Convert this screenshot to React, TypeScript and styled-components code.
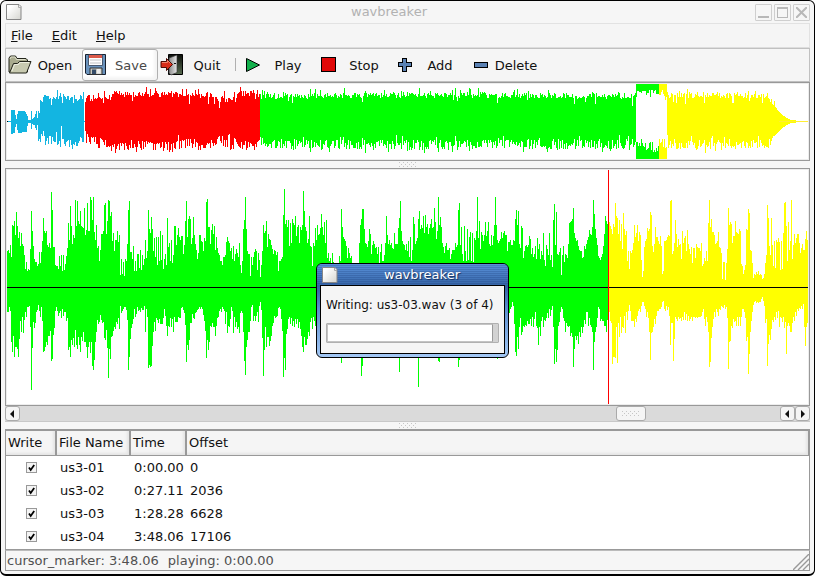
import React from "react";
import styled, { createGlobalStyle, css } from "styled-components";

const GlobalStyle = createGlobalStyle`
  * { box-sizing: border-box; }
  html, body { margin: 0; padding: 0; background: #fff; }
  body, button { font: 13px/16px "DejaVu Sans", sans-serif; color: #111; }
  button { margin: 0; padding: 0; border: 0; background: none; }
  svg { display: block; flex: none; }
`;

/* ---------- waveform data ---------- */

/* Samples are display levels, one per column, three levels to a pixel. */
const SILENCE = 367;
const COLS = 801;

type Segment = { start: number; length: number; upper: string; lower: string };

const SEGMENTS: Segment[] = [
  {
    start: 0,
    length: 198,
    upper: `258 256 266 240 278 180 185 168 210 141 183 220 202 243 204 237 243 272 312 293 320 312 315 252 138 200 243 282 291 293 303 297
      262 295 262 228 160 198 206 200 240 246 234 250 81 135 246 246 300 303 305 312 275 303 270 320 272 315 297 273 249 174 225 123
      185 237 210 220 105 185 108 170 178 138 183 186 190 130 210 195 115 200 200 98 105 165 96 202 225 180 250 245 290 255 208 208
      198 120 114 208 170 105 108 153 142 230 205 258 225 225 200 232 210 330 282 328 293 335 282 290 237 135 110 262 262 282 243 320
      290 320 267 267 310 256 315 270 300 282 225 280 258 135 193 205 158 192 260 220 278 217 300 217 288 198 285 210 312 282 267 300
      160 248 234 290 225 296 270 183 185 240 210 190 216 225 213 213 268 240 170 108 216 162 153 162 237 220 158 212 237 255 282 265
      210 212 228 232 258 220`,
    lower: `440 440 425 435 528 558 510 575 543 545 550 573 520 465 500 455 503 462 440 455 425 425 420 485 672 548 470 487 473 440 433 418
      437 455 425 467 560 557 545 530 537 510 510 497 587 579 508 486 437 424 437 450 443 435 458 430 452 440 440 467 457 552 543 575
      522 537 517 543 492 538 550 515 538 560 515 525 500 528 530 543 578 545 528 563 528 600 614 582 530 498 463 475 470 447 462 471
      470 517 524 492 548 638 549 581 513 512 497 485 490 470 476 456 489 420 443 435 430 425 425 433 464 614 575 521 488 475 460 431
      453 445 425 437 432 440 428 432 432 420 500 430 453 608 598 605 602 540 500 470 495 458 462 473 460 476 475 476 458 430 450 480
      510 480 484 457 485 460 500 455 470 468 470 455 458 458 428 423 432 442 478 590 537 552 523 473 473 445 458 460 443 440 433 430
      423 430 425 430 448 465`,
  },
  {
    start: 198,
    length: 205,
    upper: `228 112 102 186 186 237 195 177 207 183 255 216 249 264 270 290 290 300 276 276 270 232 216 228 234 260 249 284 243 288 268 252
      265 276 234 302 324 290 192 165 96 192 258 267 267 335 276 300 276 262 252 258 315 264 285 336 300 258 180 204 200 168 246 207
      222 225 240 252 267 255 258 270 262 318 290 290 282 276 150 72 178 165 186 165 243 174 234 162 174 182 153 213 186 180 234 186
      195 180 78 140 186 198 234 222 153 243 248 303 234 243 189 225 180 210 207 190 147 186 210 172 234 165 280 264 290 280 300 264
      292 295 300 300 300 300 275 290 132 186 217 222 230 245 280 250 264 280 273 300 300 300 300 300 300 300 234 180 162 132 132 192
      235 237 246 230 192 207 268 240 228 237 250 246 268 246 295 262 237 290 290 270 234 153 210 237 225 240 234 250 252 204 237 237
      237 190 160 108 200 228 237 240 255 238 258 228 276`,
    lower: `495 578 524 552 530 480 483 472 485 485 512 480 458 455 435 430 440 425 430 437 475 440 502 480 485 460 425 437 502 455 485 470
      490 485 503 443 437 443 500 585 627 545 524 498 498 465 425 417 465 452 465 452 440 470 420 408 432 517 630 552 485 543 515 513
      540 525 510 480 472 452 457 455 452 428 425 430 460 497 633 578 614 505 490 460 455 475 458 480 465 485 460 476 460 488 470 490
      510 543 560 515 537 537 520 500 510 470 458 490 455 467 480 500 500 500 500 500 500 500 500 500 500 500 500 500 500 500 500 500
      500 500 500 500 500 500 500 500 591 520 500 500 500 500 500 500 500 500 500 500 500 500 500 500 500 500 500 500 630 600 500 500
      500 500 500 500 500 500 500 500 500 500 500 500 500 500 500 500 500 500 500 500 500 500 500 500 500 500 500 500 500 500 500 500
      500 500 618 500`,
  },
  {
    start: 403,
    length: 198,
    upper: `216 288 255 158 178 237 228 220 162 138 192 180 190 155 204 150 188 178 207 190 178 162 190 186 129 172 222 198 96 180 158 186
      234 246 264 243 234 255 255 249 282 268 255 255 255 234 246 240 135 114 240 186 268 290 183 258 288 192 286 216 202 290 204 292
      219 225 198 96 219 168 252 201 210 228 210 171 213 198 171 238 243 210 240 213 180 96 180 225 234 228 222 202 219 204 198 210
      210 258 232 232 225 240 240 225 228 162 135 180 138 237 250 183 189 280 258 243 240 246 240 213 222 268 250 276 267 243 282 219
      252 238 282 258 270 204 285 305 240 252 270 204 285 270 308 165 117 240 141 267 270 261 250 330 270 243 291 268 270 280 238 174
      172 170 162 129 204 219 228 225 243 255 258 260 280 276 243 252 237 225 216 195 207 210 186 105 147 192 219 240 273 280 285 276
      267 243 207 153 168 177`,
    lower: `500 500 500 500 500 500 500 500 663 500 500 500 500 500 500 500 500 500 500 500 500 500 500 500 500 500 500 500 587 590 500 500
      500 500 500 500 500 500 500 500 500 500 500 500 500 500 500 500 603 583 500 500 500 500 500 500 500 500 500 500 500 500 500 500
      500 500 500 500 500 500 500 500 500 500 500 500 500 500 500 500 500 500 500 500 500 500 500 581 500 500 500 500 500 500 500 500
      470 455 450 443 430 423 410 422 475 558 570 515 549 485 458 508 498 480 485 477 480 467 476 476 460 480 455 485 460 440 480 488
      537 485 510 465 455 485 462 465 458 442 458 430 450 433 420 485 594 549 588 552 480 470 440 425 430 458 465 500 472 482 483 480
      510 502 515 603 549 510 522 510 534 498 513 485 502 485 462 475 440 440 480 458 478 485 500 614 528 498 485 457 425 430 465 460
      467 467 480 480 498 462`,
  },
  {
    start: 601,
    length: 200,
    upper: `175 172 183 192 207 178 186 114 153 160 207 165 228 178 252 144 192 210 198 288 258 312 258 264 255 234 180 216 204 180 228 201
      210 286 338 318 246 228 222 189 198 192 141 150 243 261 237 186 216 216 230 237 213 243 327 320 228 228 225 216 210 213 108 105
      267 258 234 165 207 246 222 240 237 282 198 234 219 213 258 195 237 252 267 246 294 249 249 280 237 246 250 249 258 234 303 297
      279 288 258 288 174 105 186 162 201 201 210 238 234 228 201 246 250 264 342 291 291 345 294 252 129 180 171 177 234 213 213 168
      201 204 207 192 198 297 303 327 315 300 192 195 132 144 255 258 294 339 327 330 321 327 318 330 327 330 342 339 327 294 270 120
      159 243 270 160 240 303 228 309 225 231 219 231 315 228 312 204 114 111 183 288 171 255 228 105 282 240 207 234 219 207 207 234
      264 249 237 255 255 222 198 225`,
    lower: `450 440 465 473 594 573 573 576 485 591 473 515 455 503 485 488 450 503 440 462 435 418 435 465 467 465 485 460 470 450 435 430
      440 420 408 408 420 430 455 440 458 498 582 503 500 485 460 476 450 437 435 430 430 425 410 405 430 437 420 432 425 450 537 472
      472 585 519 455 460 465 455 460 458 465 455 462 440 462 445 465 450 465 460 455 465 453 455 458 455 458 453 455 455 452 440 430
      460 482 455 470 500 605 588 516 485 460 440 455 430 440 450 430 432 422 425 428 418 430 425 458 609 528 525 480 488 460 470 465
      482 455 480 455 480 455 430 430 440 457 525 515 624 564 500 465 440 418 410 405 413 410 413 408 410 400 395 405 420 473 460 600
      534 507 522 490 462 470 455 462 440 458 437 485 455 458 470 455 486 470 564 480 473 480 500 500 473 455 465 440 450 430 435 427
      430 422 430 415 485 540 485 473`,
  },
];

type Column = [up: number, down: number];

const detail: Column[] = [];
for (const seg of SEGMENTS) {
  const up = seg.upper.trim().split(/\s+/).map(Number);
  const down = seg.lower.trim().split(/\s+/).map(Number);
  for (let i = 0; i < seg.length; i++) {
    detail[seg.start + i] = [
      Math.round((SILENCE - (up[i] ?? 250)) / 3),
      Math.round(((down[i] ?? 500) - SILENCE) / 3),
    ];
  }
}

/* Overview envelope: column, height above and below the axis. */
const ENVELOPE: [number, number, number][] = [
  [0, 0, 0], [3, 0, 0], [4, 11, 12], [7, 11, 11], [8, 6, 5], [9, 2, 2], [10, 7, 8], [11, 10, 11],
  [17, 10, 10], [19, 7, 10], [20, 5, 4], [21, 1, 1], [23, 1, 1], [24, 10, 7], [25, 2, 2], [27, 4, 3],
  [29, 10, 8], [30, 3, 3], [31, 15, 16], [36, 23, 18], [50, 24, 20], [60, 24, 22], [70, 23, 22],
  [76, 23, 17], [78, 18, 17], [80, 23, 17], [100, 23, 22], [110, 27, 23], [160, 27, 24], [190, 25, 21],
  [203, 26, 24], [212, 22, 16], [218, 22, 21], [223, 21, 21], [232, 26, 22], [244, 30, 25],
  [250, 28, 22], [252, 24, 15], [256, 25, 22], [400, 26, 23], [620, 25, 22], [628, 24, 20],
  [630, 27, 20], [650, 29, 26], [661, 26, 22], [700, 26, 23], [755, 25, 22], [760, 26, 21],
  [765, 19, 17], [770, 11, 11], [775, 6, 6], [779, 3, 3], [784, 1, 1], [800, 0, 0],
];

let seed = 17;
const rand = () => {
  seed = (seed * 16807) % 2147483647;
  return seed / 2147483647;
};

const overview: Column[] = Array.from({ length: COLS }, (_, x): Column => {
  const k = Math.max(1, ENVELOPE.findIndex((p) => p[0] >= x));
  const [x0, u0, d0] = ENVELOPE[k - 1];
  const [x1, u1, d1] = ENVELOPE[k];
  const t = (x - x0) / (x1 - x0);
  const vary = (base: number, spread: number) => {
    if (base < 14) return Math.round(base);
    const r = rand();
    if (r < 0.06) return Math.round(base - 4 - rand() * 6);
    if (r > 0.93) return Math.round(base + 3 + rand() * 5);
    return Math.round(base - spread + rand() * spread * 2);
  };
  return [vary(u0 + (u1 - u0) * t, 3), vary(d0 + (d1 - d0) * t, 5)];
});
overview[54] = [24, 4];
overview[77] = [0, 0];

function columnsPath(data: Column[], from: number, to: number, axis: number) {
  let d = "";
  for (let x = from; x < to; x++) {
    const [up, down] = data[x];
    d += `M${x} ${axis - up}h1V${axis + 1 + down}h-1z`;
  }
  return d;
}

const GREEN = "#00ff00";
const YELLOW = "#ffff00";

/* ---------- window ---------- */

const Window = styled.main`
  position: relative;
  display: flex;
  flex-direction: column;
  min-height: 100vh;
  padding: 0 4px 3px;
  border: 1px solid #000;
  border-bottom-width: 2px;
  border-radius: 6px;
  background: #f6f6f6;
`;

const TitleBar = styled.header`
  display: flex;
  align-items: center;
  height: 22px;
  color: #b2b2b2;
`;

const TitleText = styled.h1`
  flex: 1;
  margin: 0;
  font: inherit;
  text-align: center;
`;

const TitleButtons = styled.div`
  display: flex;
  gap: 2px;
`;

const TitleButton = styled.button`
  display: grid;
  place-items: center;
  width: 17px;
  height: 17px;
  border: 1px solid #cfcfcf;
  border-radius: 1px;
`;

const MenuBar = styled.nav`
  display: flex;
  align-items: center;
  gap: 7px;
  height: 25px;
  border: 1px solid #e2e2e2;
  border-bottom-color: #ddd;
  background: #f5f5f5;
`;

const MenuItem = styled.button`
  padding: 3px 7px 3px 5px;
`;

const ToolBar = styled.div`
  display: flex;
  height: 34px;
  border: 1px solid #c0c0c0;
  background: #f5f5f5;
`;

const ToolButton = styled.button<{ $hover?: boolean }>`
  display: flex;
  align-items: center;
  width: 76px;
  padding: 0 2px;
  border-radius: 3px;
  ${(p) =>
    p.$hover &&
    css`
      padding: 0 1px;
      border: 1px solid #b0b0b0;
      background: #fff;
      color: #484848;
      box-shadow: inset -3px -3px 3px #f4f4f4;
    `}
`;

const ToolLabel = styled.span`
  flex: 1;
  padding: 1px 2px 0 0;
  text-align: center;
`;

const Separator = styled.span`
  width: 1px;
  height: 13px;
  margin: 9px 3px 0 1px;
  background: #b0b0b0;
`;

const Pane = styled.section<{ $grow?: boolean; $height?: number }>`
  display: flex;
  flex: ${(p) => (p.$grow ? "1 1 0" : "none")};
  height: ${(p) => (p.$height ? `${p.$height}px` : "auto")};
  min-height: 0;
  padding: 1px;
  border: 1px solid #999;
  background: #fff;
  box-shadow: inset 0 0 0 1px #ededed;
`;

const Chart = styled.svg`
  width: 100%;
  height: 100%;
  min-width: 0;
  flex: 1;
`;

const SashBar = styled.div`
  display: grid;
  place-items: center;
  height: 7px;
`;

const ScrollBar = styled.div`
  display: flex;
  height: 16px;
  background: #dadada;
  border-bottom: 1px solid #c8c8c8;
`;

const ScrollPart = styled.button<{ $wide?: boolean }>`
  display: grid;
  place-items: center;
  width: ${(p) => (p.$wide ? 30 : 15)}px;
  height: 15px;
  border: 1px solid #aaa;
  border-radius: 3px;
  background: #f5f5f5;
`;

const Trough = styled.div<{ $part: number }>`
  flex: ${(p) => p.$part} 1 0;
`;

const TablePane = styled.section`
  height: 121px;
  flex: none;
  border: 1px solid #999;
  border-top-width: 2px;
  background: #fff;
`;

const Table = styled.table`
  width: 100%;
  table-layout: fixed;
  border-collapse: separate;
  border-spacing: 0;
`;

const HeadCell = styled.th<{ $width?: number }>`
  width: ${(p) => (p.$width ? `${p.$width}px` : "auto")};
  height: 25px;
  padding: 0 0 0 2px;
  border-right: ${(p) => (p.$width ? 2 : 1)}px solid #999;
  border-bottom: 1px solid #999;
  background: #f5f5f5;
  box-shadow: inset -2px -2px 3px #e4e4e4;
  font-weight: normal;
  text-align: left;
  white-space: nowrap;
`;

const Cell = styled.td<{ $center?: boolean }>`
  height: 23px;
  padding: ${(p) => (p.$center ? "0" : "0 0 0 3px")};
  white-space: nowrap;
`;

const Check = styled.input`
  display: block;
  appearance: none;
  width: 11px;
  height: 11px;
  margin: 0 auto;
  border: 1px solid #999;
  background: #fff;
  &:checked {
    background: #f4f4f4
      url("data:image/svg+xml,%3Csvg xmlns='http://www.w3.org/2000/svg' viewBox='0 0 9 9'%3E%3Cpath d='M2 4.5L3.7 7L7.2 2' fill='none' stroke='%23000' stroke-width='1.8'/%3E%3C/svg%3E");
  }
`;

const StatusBar = styled.footer`
  display: flex;
  align-items: center;
  gap: 9px;
  height: 21px;
  padding-left: 1px;
  border: 1px solid #999;
  border-top-color: #bbb;
  color: #505050;
`;

const Grip = styled.svg`
  margin-left: auto;
  align-self: flex-end;
`;

/* ---------- progress dialog ---------- */

const Dialog = styled.section`
  position: absolute;
  left: 315px;
  top: 262px;
  width: 193px;
  padding: 0 3px 3px;
  border: 1px solid #000;
  border-radius: 6px;
  background: linear-gradient(#3c73b8 0, #2f5c9e 20px, #5b8fd0 45px, #a3c8f5 100%);
`;

const DialogTitle = styled.header`
  display: flex;
  align-items: center;
  height: 21px;
  margin: 0 -3px;
  padding: 0 3px 0 4px;
  border-radius: 5px 5px 0 0;
  background:
    repeating-linear-gradient(transparent 0 1px, rgba(20, 50, 110, 0.22) 1px 2px),
    linear-gradient(#5a93dc, #3766a8);
  color: #fff;
  text-shadow: 1px 1px 1px #142f5c;
`;

const DialogBody = styled.div`
  display: flex;
  flex-direction: column;
  gap: 10px;
  padding: 11px 5px 10px;
  border: 1px solid #000;
  background: #f5f5f5;
`;

const DialogLabel = styled.label`
  font-size: 12px;
  white-space: nowrap;
`;

const Progress = styled.progress`
  appearance: none;
  display: block;
  width: 173px;
  height: 20px;
  border: 1px solid #b0b0b0;
  border-radius: 1px;
  &::-webkit-progress-bar { background: #d2d2d2; }
  &::-webkit-progress-value {
    background: #fff;
    border: 1px solid #c4c4c4;
    border-right: 1px solid #999;
  }
`;

/* ---------- drawings ---------- */

const PageIcon = () => (
  <svg width="18" height="18" viewBox="0 0 18 18">
    <defs>
      <linearGradient id="page" x1="0" y1="0" x2="1" y2="1">
        <stop offset="0.2" stopColor="#fff" />
        <stop offset="1" stopColor="#d5d5d0" />
      </linearGradient>
    </defs>
    <path d="M1.500 1.500h12.500l2 2v13h-14.500z" fill="url(#page)" stroke="#868686" />
    <path d="M13.500 2v2.500h2.500" fill="#eee" stroke="#aaa" />
  </svg>
);

const OpenIcon = () => (
  <svg width="24" height="24" viewBox="0 0 24 24">
    <path d="M1 19V5l1.500-2h5l1.500 2.500h9l1.500 1.500v12z" fill="#a9ab8e" stroke="#22241a" />
    <path d="M2 6l1-2h4l1.500 2.500h9" fill="none" stroke="#dfe0cb" />
    <path d="M1.500 20l4-9.500h4l2-2h11.500l-4.500 11.500z" fill="#c8cab0" stroke="#22241a" strokeLinejoin="round" />
    <path d="M4 18l2.500-6.500h4l1.500-2h9" fill="none" stroke="#eeefe0" />
  </svg>
);

const SaveIcon = () => (
  <svg width="24" height="24" viewBox="0 0 24 24">
    <path d="M1.500 1.500h20v20H3l-1.500-1.500z" fill="#6a93bd" stroke="#17202e" />
    <path d="M4.500 2h14v10.500h-14z" fill="#fff" stroke="#4a5a70" />
    <path d="M5 2h13v3H5z" fill="#dc5a4a" />
    <path d="M6 7h11M6 10h11" stroke="#c2c2c2" />
    <path d="M6 15h12v6.500H6z" fill="#c9c9c0" stroke="#333" />
    <path d="M8 16.500h4V21H8z" fill="#354c68" />
    <path d="M13 16h3.500v4.500H13z" fill="#eee" />
  </svg>
);

const QuitIcon = () => (
  <svg width="24" height="24" viewBox="0 0 24 24">
    <defs>
      <linearGradient id="door" x1="0" x2="1">
        <stop offset="0" stopColor="#8a8a8a" />
        <stop offset="1" stopColor="#e8e8e8" />
      </linearGradient>
      <linearGradient id="room" x1="0" y1="0" x2="0" y2="1">
        <stop offset="0" stopColor="#0c0f0b" />
        <stop offset="1" stopColor="#586b50" />
      </linearGradient>
    </defs>
    <path d="M8.500 1.500h14v20h-14z" fill="url(#room)" stroke="#000" />
    <path d="M9 20V5l8-3v17.500l-6 2.500z" fill="url(#door)" stroke="#333" strokeWidth="0.700" />
    <path d="M14 10.500h2" stroke="#111" />
    <path d="M1 8.500h5.500v-3l6 6-6 6v-3H1z" fill="#d82c18" stroke="#4b0b05" />
    <path d="M2 9.500h5.500v-2l3 3" fill="none" stroke="#f1836c" />
  </svg>
);

const PlayIcon = () => (
  <svg width="24" height="24" viewBox="0 0 24 24">
    <path d="M5.500 5.500v13l13-6.500z" fill="#12b04c" stroke="#000" />
  </svg>
);

const StopIcon = () => (
  <svg width="24" height="24" viewBox="0 0 24 24" shapeRendering="crispEdges">
    <path d="M4.500 4.500h14v14h-14z" fill="#e00808" stroke="#000" />
  </svg>
);

const AddIcon = () => (
  <svg width="24" height="24" viewBox="0 0 24 24" shapeRendering="crispEdges">
    <path d="M9.500 5.500h4v4h5v4h-5v5h-4v-5h-4v-4h4z" fill="#5b82b4" stroke="#000" />
  </svg>
);

const DeleteIcon = () => (
  <svg width="24" height="24" viewBox="0 0 24 24" shapeRendering="crispEdges">
    <path d="M5.500 9.500h13v5h-13z" fill="#5b82b4" stroke="#000" />
  </svg>
);

const Dots = () => (
  <svg width="18" height="5" viewBox="0 0 18 5" shapeRendering="crispEdges">
    {[0, 4, 8, 12, 16].map((x) => (
      <path key={x} d={`M${x} 0h1v1h-1zM${x + 2} 2h1v1h-1zM${x} 4h1v1h-1z`} fill="#c6c6c6" />
    ))}
  </svg>
);

const Arrow = ({ right }: { right?: boolean }) => (
  <svg width="5" height="8" viewBox="0 0 5 8">
    <path d={right ? "M1 0v8l4-4z" : "M4 0v8L0 4z"} fill="#111" />
  </svg>
);

const OverviewChart = () => {
  const path = (a: number, b: number) => columnsPath(overview, a, b, 37);
  return (
    <Chart viewBox="0 0 801 75" preserveAspectRatio="none" shapeRendering="crispEdges" role="img" aria-label="Whole recording">
      <path d={path(1, 78)} fill="#13b5e1" />
      <path d="M0 37h1v1H0z" fill="#000" />
      <path d={path(78, 253)} fill="#ff0000" />
      <path d={path(253, 629)} fill={GREEN} />
      <path d="M629 0h23v75h-23z" fill={GREEN} />
      <path d="M652 0h8v75h-8z" fill={YELLOW} />
      <path d={path(629, 660)} fill="#fff" />
      <path d={path(660, 789)} fill={YELLOW} />
      <path d="M772 37h29v1h-29z" fill="#ffee33" />
    </Chart>
  );
};

const DetailChart = () => (
  <Chart viewBox="0 0 801 234" preserveAspectRatio="none" shapeRendering="crispEdges" role="img" aria-label="Selected part">
    <path d={columnsPath(detail, 0, 601, 117)} fill={GREEN} />
    <path d={columnsPath(detail, 601, 801, 117)} fill={YELLOW} />
    <path d="M0 117h801v1H0z" fill="#000" />
    <path d="M601 0h1v234h-1z" fill="#ff0000" />
  </Chart>
);

/* ---------- app ---------- */

const TRACKS = [
  { name: "us3-01", time: "0:00.00", offset: 0 },
  { name: "us3-02", time: "0:27.11", offset: 2036 },
  { name: "us3-03", time: "1:28.28", offset: 6628 },
  { name: "us3-04", time: "3:48.06", offset: 17106 },
];

const Tool = ({ icon, label, hover }: { icon: React.ReactNode; label: string; hover?: boolean }) => (
  <ToolButton type="button" $hover={hover}>
    {icon}
    <ToolLabel>{label}</ToolLabel>
  </ToolButton>
);

export default function App() {
  return (
    <>
      <GlobalStyle />
      <Window>
        <TitleBar>
          <PageIcon />
          <TitleText>wavbreaker</TitleText>
          <TitleButtons>
            <TitleButton type="button" aria-label="Minimize">
              <svg width="11" height="11"><path d="M0 9h11v2H0z" fill="#b8b8b8" /></svg>
            </TitleButton>
            <TitleButton type="button" aria-label="Maximize">
              <svg width="11" height="11"><path d="M0 0h11v11H0zM1 2v8h9V2z" fill="#b8b8b8" fillRule="evenodd" /></svg>
            </TitleButton>
            <TitleButton type="button" aria-label="Close">
              <svg width="11" height="11"><path d="M0 0l11 11M11 0L0 11" stroke="#b8b8b8" strokeWidth="2" /></svg>
            </TitleButton>
          </TitleButtons>
        </TitleBar>
        <MenuBar>
          <MenuItem type="button"><u>F</u>ile</MenuItem>
          <MenuItem type="button"><u>E</u>dit</MenuItem>
          <MenuItem type="button"><u>H</u>elp</MenuItem>
        </MenuBar>
        <ToolBar>
          <Tool icon={<OpenIcon />} label="Open" />
          <Tool icon={<SaveIcon />} label="Save" hover />
          <Tool icon={<QuitIcon />} label="Quit" />
          <Separator />
          <Tool icon={<PlayIcon />} label="Play" />
          <Tool icon={<StopIcon />} label="Stop" />
          <Tool icon={<AddIcon />} label="Add" />
          <Tool icon={<DeleteIcon />} label="Delete" />
        </ToolBar>
        <Pane $height={79}>
          <OverviewChart />
        </Pane>
        <SashBar><Dots /></SashBar>
        <Pane $grow>
          <DetailChart />
        </Pane>
        <ScrollBar>
          <ScrollPart type="button" aria-label="Scroll left"><Arrow /></ScrollPart>
          <Trough $part={596} />
          <ScrollPart type="button" aria-label="Scroll position" $wide><Dots /></ScrollPart>
          <Trough $part={134} />
          <ScrollPart type="button" aria-label="Step left"><Arrow /></ScrollPart>
          <ScrollPart type="button" aria-label="Step right"><Arrow right /></ScrollPart>
        </ScrollBar>
        <SashBar><Dots /></SashBar>
        <TablePane>
          <Table>
            <thead>
              <tr>
                <HeadCell $width={51}>Write</HeadCell>
                <HeadCell $width={74}>File Name</HeadCell>
                <HeadCell $width={56}>Time</HeadCell>
                <HeadCell>Offset</HeadCell>
              </tr>
            </thead>
            <tbody>
              {TRACKS.map((t) => (
                <tr key={t.name}>
                  <Cell $center>
                    <Check type="checkbox" defaultChecked aria-label={`Write ${t.name}`} />
                  </Cell>
                  <Cell>{t.name}</Cell>
                  <Cell>{t.time}</Cell>
                  <Cell>{t.offset}</Cell>
                </tr>
              ))}
            </tbody>
          </Table>
        </TablePane>
        <StatusBar>
          <span>cursor_marker: 3:48.06</span>
          <span>playing: 0:00.00</span>
          <Grip width="16" height="16" viewBox="0 0 16 16">
            <path d="M0 16L16 0M5 16L16 5M10 16l6-6" stroke="#999" strokeWidth="1.400" />
          </Grip>
        </StatusBar>
        <Dialog role="dialog" aria-labelledby="progress-title">
          <DialogTitle>
            <PageIcon />
            <TitleText as="h2" id="progress-title">wavbreaker</TitleText>
          </DialogTitle>
          <DialogBody>
            <DialogLabel htmlFor="progress">Writing: us3-03.wav (3 of 4)</DialogLabel>
            <Progress id="progress" max={100} value={97} />
          </DialogBody>
        </Dialog>
      </Window>
    </>
  );
}
